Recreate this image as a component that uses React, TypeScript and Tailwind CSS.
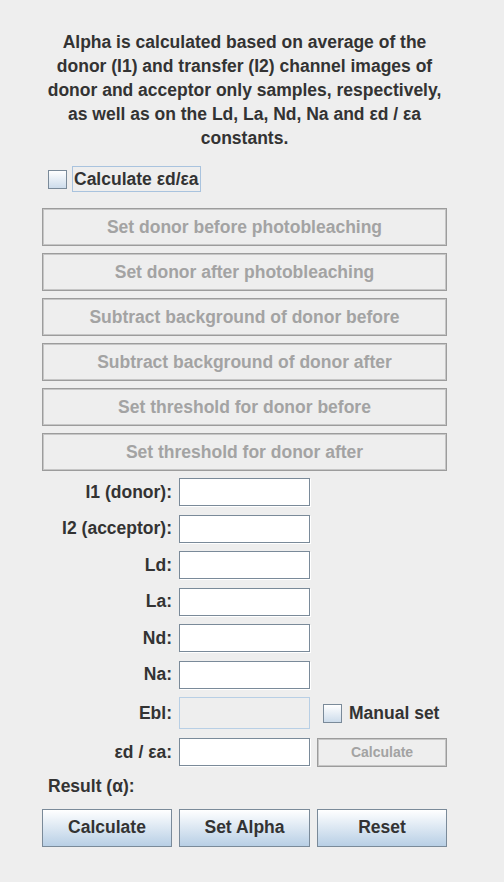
import React, { useState } from 'react';

const font = "font-['Liberation_Sans',Arial,sans-serif]";

const actions = [
  'Set donor before photobleaching',
  'Set donor after photobleaching',
  'Subtract background of donor before',
  'Subtract background of donor after',
  'Set threshold for donor before',
  'Set threshold for donor after',
];

const fields = ['I1 (donor):', 'I2 (acceptor):', 'Ld:', 'La:', 'Nd:', 'Na:'];

const Check: React.FC<{ checked: boolean; onChange: () => void }> = ({ checked, onChange }) => (
  <button
    type="button"
    onClick={onChange}
    className="w-[19px] h-[19px] border border-[#7a8a99] bg-gradient-to-b from-[#ffffff] to-[#cddceb] flex items-center justify-center shrink-0"
  >
    {checked && <span className="text-[13px] leading-none text-[#333]">✓</span>}
  </button>
);

const DisabledButton: React.FC<{ label: string; className?: string }> = ({ label, className = '' }) => (
  <div
    className={`border border-[#9c9c9c] shadow-[inset_0_0_0_1px_#c6c6c6] bg-[#eeeeee] flex items-center justify-center text-[#a3a3a3] font-bold ${className}`}
  >
    {label}
  </div>
);

const TextField: React.FC = () => (
  <input
    type="text"
    className="h-[28px] w-full border border-[#7a8a99] bg-white shadow-[1px_1px_0_#ffffff] outline-none px-1 text-[15px] text-[#333]"
  />
);

const MainButton: React.FC<{ label: string }> = ({ label }) => (
  <button
    type="button"
    className="h-[38px] border border-[#7a8a99] bg-gradient-to-b from-[#ffffff] to-[#b8cfe5] text-[17.5px] font-bold text-[#333]"
  >
    {label}
  </button>
);

const App: React.FC = () => {
  const [calcEps, setCalcEps] = useState(false);
  const [manual, setManual] = useState(false);

  return (
    <div className={`min-h-[882px] w-[504px] bg-[#eeeeee] text-[#333] ${font}`}>
      <div className="pl-[42px] pr-[57px] pt-[30px]">
        <p className="text-[17.5px] font-bold leading-[24px] text-center -mx-[6px]">
          Alpha is calculated based on average of the
          <br />
          donor (I1) and transfer (I2) channel images of
          <br />
          donor and acceptor only samples, respectively,
          <br />
          as well as on the Ld, La, Nd, Na and εd / εa
          <br />
          constants.
        </p>

        {/* epsilon checkbox */}
        <div className="flex items-center gap-[5px] mt-[16px] pl-[6px] h-[26px]">
          <Check checked={calcEps} onChange={() => setCalcEps(!calcEps)} />
          <span className="border border-[#a9c3de] px-[1px] h-[26px] flex items-center text-[17.5px] font-bold">
            Calculate εd/εa
          </span>
        </div>

        {/* image selection buttons */}
        <div className="flex flex-col gap-[7px] mt-[16px]">
          {actions.map((a) => (
            <DisabledButton key={a} label={a} className="h-[38px] text-[17.5px]" />
          ))}
        </div>

        {/* constants */}
        <div className="grid grid-cols-[130px_131px_130px] gap-x-[7px] gap-y-[8.5px] mt-[7px] items-center">
          {fields.map((f) => (
            <React.Fragment key={f}>
              <label className="text-right text-[17.5px] font-bold">{f}</label>
              <TextField />
              <div />
            </React.Fragment>
          ))}

          <label className="text-right text-[17.5px] font-bold">Ebl:</label>
          <div className="h-[32px] border border-[#b8cfe5] bg-[#eeeeee]" />
          <div className="flex items-center gap-[7px] pl-[6px]">
            <Check checked={manual} onChange={() => setManual(!manual)} />
            <span className="text-[17.5px] font-bold">Manual set</span>
          </div>

          <label className="text-right text-[17.5px] font-bold">εd / εa:</label>
          <TextField />
          <DisabledButton label="Calculate" className="h-[29px] text-[14px]" />
        </div>

        <div className="mt-[7px] pl-[6px] text-[17.5px] font-bold leading-[24px]">Result (α):</div>

        <div className="grid grid-cols-[130px_131px_130px] gap-x-[7px] mt-[11px]">
          <MainButton label="Calculate" />
          <MainButton label="Set Alpha" />
          <MainButton label="Reset" />
        </div>
      </div>
    </div>
  );
};

export default App;
